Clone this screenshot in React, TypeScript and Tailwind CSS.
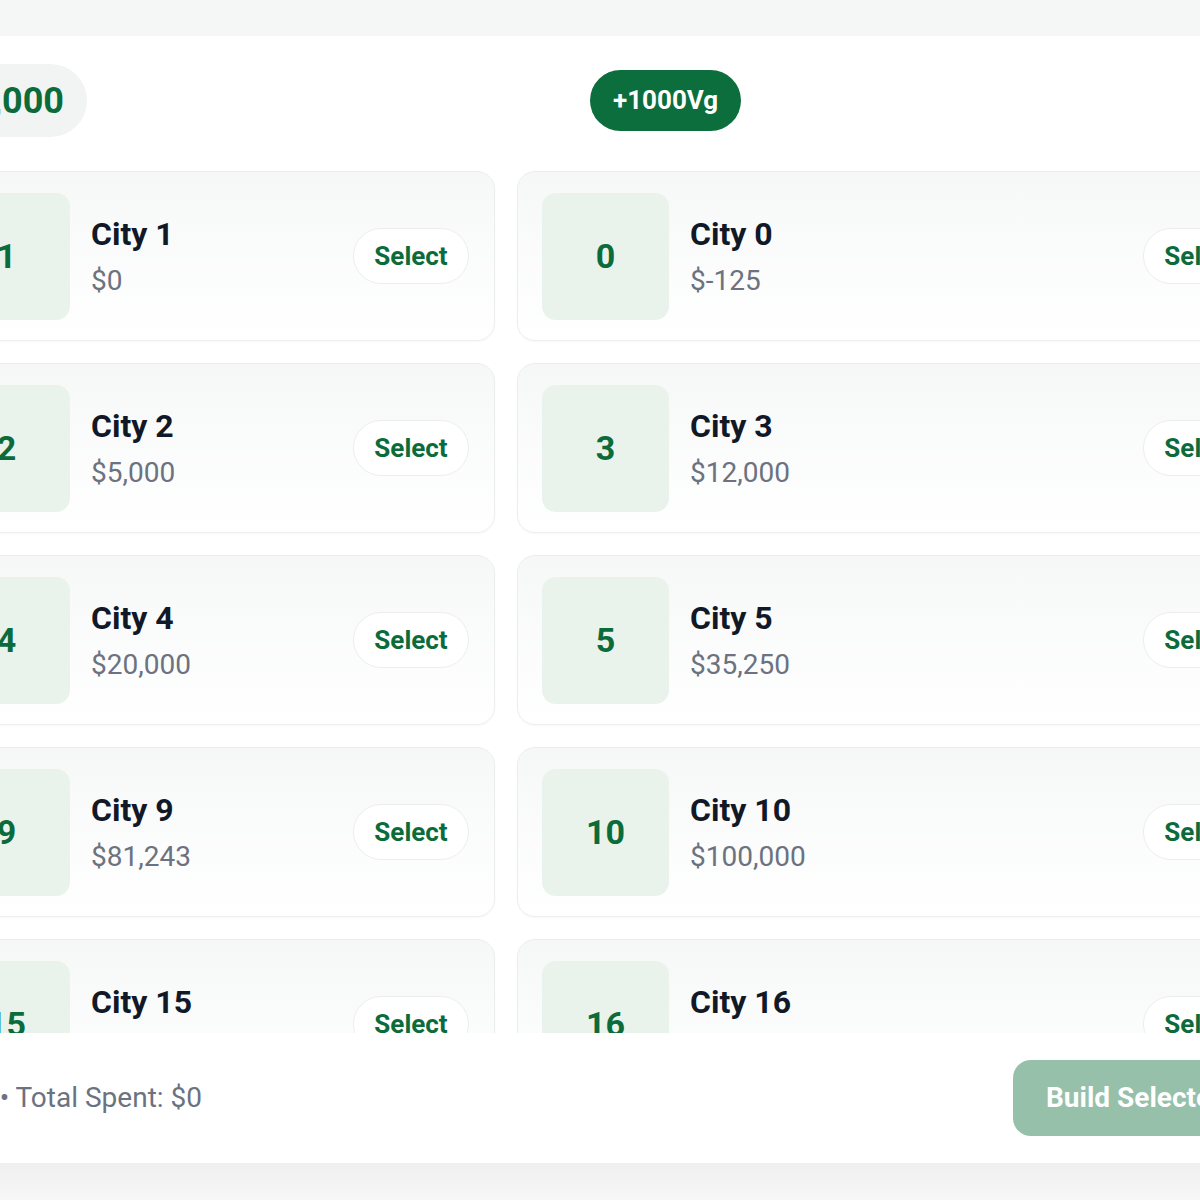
import React from "react";

interface City {
  id: number;
  name: string;
  price: string;
}

const leftCities: City[] = [
  { id: 1, name: "City 1", price: "$0" },
  { id: 2, name: "City 2", price: "$5,000" },
  { id: 4, name: "City 4", price: "$20,000" },
  { id: 9, name: "City 9", price: "$81,243" },
  { id: 15, name: "City 15", price: "$150,000" },
];

const rightCities: City[] = [
  { id: 0, name: "City 0", price: "$-125" },
  { id: 3, name: "City 3", price: "$12,000" },
  { id: 5, name: "City 5", price: "$35,250" },
  { id: 10, name: "City 10", price: "$100,000" },
  { id: 16, name: "City 16", price: "$175,000" },
];

function CityCard({ city }: { city: City }) {
  return (
    <div className="flex h-[170px] shrink-0 items-center rounded-[18px] border border-[#eceeed] bg-gradient-to-b from-[#f6f8f7] to-white pl-[24px] pr-[25px] shadow-[0_1px_2px_rgba(0,0,0,0.03)]">
      <div className="flex h-[127px] w-[127px] shrink-0 items-center justify-center rounded-[14px] bg-[#e9f3ec] text-[34px] font-bold text-[#0b6b3a]">
        {city.id}
      </div>
      <div className="ml-[21px] flex flex-1 flex-col">
        <span className="text-[32px] font-bold leading-[40px] text-[#111827]">{city.name}</span>
        <span className="mt-[10px] text-[28px] leading-[34px] text-[#6b7280]">{city.price}</span>
      </div>
      <button className="h-[56px] w-[116px] shrink-0 rounded-full border border-[#eceeed] bg-white text-[26px] font-bold text-[#0b6b3a]">
        Select
      </button>
    </div>
  );
}

export default function App() {
  return (
    <div className="min-h-[1200px] w-[1200px] overflow-hidden bg-[#f6f7f7] font-['Roboto',sans-serif]">
      <div className="h-[36px] bg-[#f5f7f6]" />

      {/* Build panel */}
      <div className="h-[1127px] bg-white">
        <div className="ml-[-82px] w-[1367px]">
          {/* Header */}
          <div className="flex items-center pt-[28px]">
            <div className="flex w-[169px] justify-end">
              <div className="flex h-[73px] items-center whitespace-nowrap rounded-full bg-[#f1f4f2] pl-[24px] pr-[23px] text-[36px] font-bold text-[#0b6b3a]">
                $1,000
              </div>
            </div>
            <div className="ml-[503px] flex h-[61px] items-center rounded-full bg-[#0b6e3c] px-[23px] text-[26px] font-bold text-white">
              +1000Vg
            </div>
          </div>

          {/* City list */}
          <div className="mt-[13px] h-[883px] overflow-hidden pt-[21px]">
            <div className="grid grid-cols-[577px_768px] gap-[22px]">
              <div className="flex flex-col gap-[22px]">
                {leftCities.map((c) => (
                  <CityCard key={c.id} city={c} />
                ))}
              </div>
              <div className="flex flex-col gap-[22px]">
                {rightCities.map((c) => (
                  <CityCard key={c.id} city={c} />
                ))}
              </div>
            </div>
          </div>

          {/* Footer */}
          <div className="flex h-[130px] items-center">
            <div className="flex w-[284px] justify-end whitespace-nowrap text-[28px] text-[#6b7280]">
              Selected: 0 • Total Spent: $0
            </div>
            <button className="ml-[811px] h-[76px] whitespace-nowrap rounded-[18px] bg-[#96c0a9] px-[33px] text-[28px] font-bold text-white">
              Build Selected
            </button>
          </div>
        </div>
      </div>

      <div className="h-[37px] bg-gradient-to-b from-[#efefef] to-[#f7f7f7]" />
    </div>
  );
}
